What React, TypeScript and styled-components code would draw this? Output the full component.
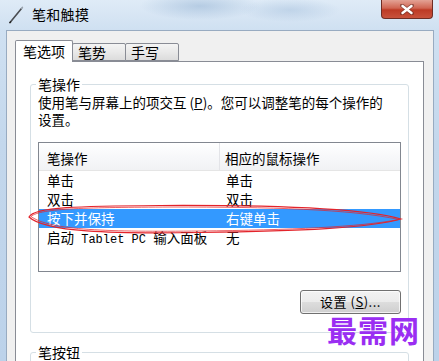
import styled, { createGlobalStyle } from 'styled-components';

const GlobalStyle = createGlobalStyle`
  html, body {
    margin: 0;
    padding: 0;
    overflow: hidden;
  }
  body {
    font-family: "Noto Sans CJK SC", "Liberation Sans", sans-serif;
    color: #000;
  }
`;

const Window = styled.div`
  position: relative;
  width: 439px;
  height: 361px;
  overflow: hidden;
  display: flex;
  flex-direction: column;
  background: linear-gradient(to bottom, #d3e3f3, #c3d7ec 40%, #bcd2ea);
`;

const TitleBar = styled.div`
  height: 30px;
  flex: none;
  display: flex;
  align-items: flex-start;
  padding: 0 6px 0 8px;
  background:
    radial-gradient(ellipse 60px 14px at 200px 6px, rgba(150, 180, 212, 0.55), transparent),
    radial-gradient(ellipse 50px 12px at 290px 10px, rgba(160, 188, 218, 0.45), transparent),
    linear-gradient(to bottom, #dfebf7, #cfe0f1);
`;

const PenIcon = styled.svg`
  width: 16px;
  height: 18px;
  margin-top: 6px;
  flex: none;
`;

const Title = styled.span`
  margin-left: 8px;
  font-size: 14px;
  line-height: 28px;
  letter-spacing: 0.3px;
`;

const CloseButton = styled.div`
  margin-left: auto;
  width: 52px;
  height: 19px;
  box-sizing: border-box;
  display: flex;
  align-items: center;
  justify-content: center;
  border: 1px solid #6f2d24;
  border-top: none;
  border-radius: 0 0 4px 4px;
  background: linear-gradient(to bottom, #e3a295, #d06552 45%, #bd3a25 55%, #c8523c);
`;

const Client = styled.div`
  flex: 1;
  display: flex;
  flex-direction: column;
  margin: 0 5px 0 6px;
  padding: 9px 9px 0 8px;
  background: #f0f0f0;
  border: 1px solid #98abc1;
  border-bottom: none;
`;

const TabStrip = styled.div`
  display: flex;
  align-items: flex-end;
  height: 22px;
  margin-bottom: -1px;
`;

const Tab = styled.div<{ $active?: boolean }>`
  position: relative;
  box-sizing: border-box;
  width: ${({ $active }) => ($active ? '58px' : '54px')};
  height: ${({ $active }) => ($active ? '22px' : '18px')};
  margin-bottom: ${({ $active }) => ($active ? '0' : '1px')};
  margin-left: ${({ $active }) => ($active ? '0' : '-1px')};
  padding-left: ${({ $active }) => ($active ? '7px' : '5px')};
  border: 1px solid #898c95;
  border-bottom: ${({ $active }) => ($active ? 'none' : '1px solid #898c95')};
  border-radius: 2px 2px 0 0;
  background: ${({ $active }) =>
    $active ? '#fff' : 'linear-gradient(to bottom, #f4f4f4, #e9e9e9 50%, #dcdcdc)'};
  z-index: ${({ $active }) => ($active ? 2 : 1)};
  font-size: 14px;
  line-height: ${({ $active }) => ($active ? '21px' : '16px')};
  white-space: nowrap;
`;

const TabPanel = styled.div`
  flex: 1;
  position: relative;
  z-index: 1;
  background: #fff;
  border: 1px solid #898c95;
  border-bottom: none;
  padding: 13px 14px 0 14px;
`;

const Group = styled.fieldset<{ $gap?: number }>`
  margin: ${({ $gap }) => $gap ?? 0}px 0 0 0;
  padding: 0 7px 18px 7px;
  border: 1px solid #d5dfe5;
  border-radius: 3px;
  min-width: 0;
`;

const Legend = styled.legend`
  margin-left: -2px;
  padding: 0 2px;
  font-size: 14px;
  line-height: 18px;
`;

const Description = styled.p`
  margin: 1px 0 0 0;
  font-size: 13.5px;
  line-height: 17px;
  white-space: nowrap;
`;

const ListView = styled.div`
  margin-top: 14px;
  height: 130px;
  box-sizing: border-box;
  border: 1px solid #828790;
  font-size: 13.5px;
`;

const HeaderRow = styled.div`
  display: flex;
  height: 28px;
  box-sizing: border-box;
  border-bottom: 1px solid #e5e5e5;
  background: linear-gradient(to bottom, #ffffff, #f7f8fa 50%, #f1f2f4);
`;

const HeaderCell = styled.div<{ $first?: boolean }>`
  box-sizing: border-box;
  width: ${({ $first }) => ($first ? '181px' : 'auto')};
  flex: ${({ $first }) => ($first ? 'none' : '1')};
  padding-left: ${({ $first }) => ($first ? '8px' : '5px')};
  border-right: ${({ $first }) => ($first ? '1px solid #e3e4e8' : 'none')};
  line-height: 30px;
`;

const Row = styled.div<{ $selected?: boolean }>`
  display: flex;
  height: 19px;
  line-height: 19px;
  background: ${({ $selected }) => ($selected ? '#3399ff' : 'transparent')};
  color: ${({ $selected }) => ($selected ? '#fff' : '#000')};
`;

const Cell = styled.div<{ $first?: boolean }>`
  box-sizing: border-box;
  width: ${({ $first }) => ($first ? '181px' : 'auto')};
  flex: ${({ $first }) => ($first ? 'none' : '1')};
  padding-left: ${({ $first }) => ($first ? '8px' : '6px')};
  white-space: pre;
`;

const Mono = styled.span`
  font-family: "Liberation Mono", monospace;
  font-size: 12px;
`;

const ButtonRow = styled.div`
  display: flex;
  justify-content: flex-end;
  margin-top: 18px;
`;

const Button = styled.div`
  width: 101px;
  height: 24px;
  box-sizing: border-box;
  border: 1px solid #707070;
  border-radius: 3px;
  background: linear-gradient(to bottom, #f2f2f2, #ebebeb 50%, #dddddd 50%, #cfcfcf);
  box-shadow: inset 0 0 0 1px rgba(255, 255, 255, 0.7);
  font-size: 13px;
  line-height: 22px;
  text-align: center;
  letter-spacing: 0.5px;
`;

const Spacer = styled.div`
  height: 60px;
`;

const Watermark = styled.div`
  position: absolute;
  left: 327px;
  top: 314px;
  z-index: 6;
  font-size: 30px;
  font-weight: 700;
  letter-spacing: 1px;
  color: #9a2ef2;
  line-height: 30px;
`;

const Annotation = styled.svg`
  position: absolute;
  left: 0;
  top: 0;
  pointer-events: none;
  z-index: 5;
`;

export default function App() {
  return (
    <>
      <GlobalStyle />
      <Window>
        <TitleBar>
          <PenIcon viewBox="0 0 16 18">
            <path d="M2 16.5 L13.5 2.5" stroke="#4a4d52" strokeWidth="1.6" strokeLinecap="round" />
            <path d="M13.5 2.5 L14.5 1.3" stroke="#9aa3ad" strokeWidth="1.4" strokeLinecap="round" />
            <path d="M1.5 17 L3 15.5" stroke="#222" strokeWidth="1.2" />
          </PenIcon>
          <Title>笔和触摸</Title>
          <CloseButton>
            <svg width="14" height="11" viewBox="0 0 14 11">
              <path
                d="M2 1.5 L12 9.5 M12 1.5 L2 9.5"
                stroke="#5a2a24"
                strokeWidth="4"
                strokeLinecap="round"
                opacity="0.55"
              />
              <path d="M2.5 2 L11.5 9 M11.5 2 L2.5 9" stroke="#fff" strokeWidth="2.4" strokeLinecap="round" />
            </svg>
          </CloseButton>
        </TitleBar>

        <Client>
          <TabStrip>
            <Tab $active>笔选项</Tab>
            <Tab>笔势</Tab>
            <Tab>手写</Tab>
          </TabStrip>

          <TabPanel>
            <Group>
              <Legend>笔操作</Legend>
              <Description>
                使用笔与屏幕上的项交互 (<u>P</u>)。您可以调整笔的每个操作的
                <br />
                设置。
              </Description>

              <ListView>
                <HeaderRow>
                  <HeaderCell $first>笔操作</HeaderCell>
                  <HeaderCell>相应的鼠标操作</HeaderCell>
                </HeaderRow>
                <Row>
                  <Cell $first>单击</Cell>
                  <Cell>单击</Cell>
                </Row>
                <Row>
                  <Cell $first>双击</Cell>
                  <Cell>双击</Cell>
                </Row>
                <Row $selected>
                  <Cell $first>按下并保持</Cell>
                  <Cell>右键单击</Cell>
                </Row>
                <Row>
                  <Cell $first>
                    启动<Mono> Tablet PC </Mono>输入面板
                  </Cell>
                  <Cell>无</Cell>
                </Row>
              </ListView>

              <ButtonRow>
                <Button>
                  设置 (<u>S</u>)...
                </Button>
              </ButtonRow>
            </Group>

            <Group $gap={10}>
              <Legend>笔按钮</Legend>
              <Spacer />
            </Group>
          </TabPanel>
        </Client>

        <Watermark>最需网</Watermark>

        <Annotation width="439" height="361" viewBox="0 0 439 361">
          <path
            d="M29 217 C 34 207, 80 206, 160 205.5 C 260 205, 360 207, 401 219 C 370 228, 300 231, 200 232.5 C 110 234, 45 232, 29 217 Z"
            fill="none"
            stroke="#e3242b"
            strokeWidth="1.2"
          />
          <path
            d="M31 216.5 C 40 208, 90 207.5, 170 207 C 270 207, 350 209, 399 219.5 C 360 227, 290 230, 200 231 C 110 232, 50 230.5, 31 216.5 Z"
            fill="none"
            stroke="#e3242b"
            strokeWidth="0.9"
            opacity="0.8"
          />
        </Annotation>
      </Window>
    </>
  );
}
